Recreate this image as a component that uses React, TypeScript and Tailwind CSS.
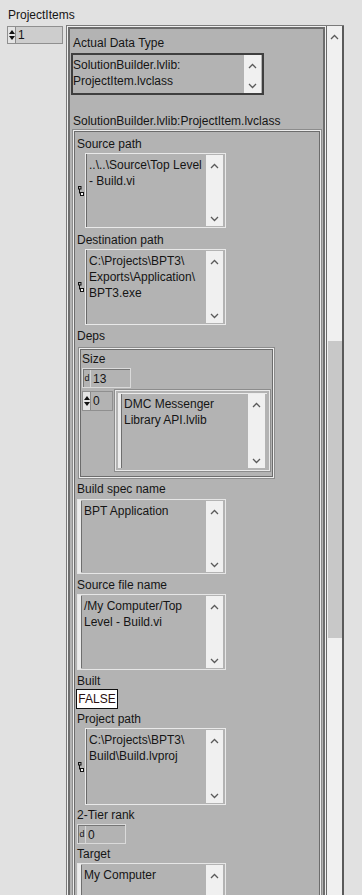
import React from "react";

// LabVIEW-style front panel: ProjectItems array of clusters

const Chevron = ({ down }: { down?: boolean }) => (
  <svg width="9" height="6" viewBox="0 0 9 6" className="shrink-0">
    <polyline
      points={down ? "1,1 4.5,4.5 8,1" : "1,5 4.5,1.5 8,5"}
      fill="none"
      stroke="#5a5a5a"
      strokeWidth="1.3"
    />
  </svg>
);

const VScroll = () => (
  <div className="w-[17px] shrink-0 self-stretch bg-[#f0f0f0] flex flex-col items-center justify-between pt-[8px] pb-[4px]">
    <Chevron />
    <Chevron down />
  </div>
);

const PathIcon = () => (
  <svg width="7" height="10" viewBox="0 0 7 10">
    <rect x="0.5" y="0.5" width="2.5" height="2.5" fill="none" stroke="#111" strokeWidth="1" />
    <line x1="1.5" y1="3" x2="1.5" y2="7.5" stroke="#111" strokeWidth="1" />
    <rect x="2.5" y="6.5" width="3" height="3" fill="#f4f4f4" stroke="#111" strokeWidth="1" />
  </svg>
);

const Spin = () => (
  <div className="w-[8px] shrink-0 flex flex-col items-center justify-center gap-[2px] border-r border-[#8a8a8a] bg-[#e4e4e4]">
    <svg width="6" height="4" viewBox="0 0 6 4">
      <polygon points="0,4 3,0 6,4" fill="#111" />
    </svg>
    <svg width="6" height="4" viewBox="0 0 6 4">
      <polygon points="0,0 6,0 3,4" fill="#111" />
    </svg>
  </div>
);

const Label = ({ children, className = "" }: { children: React.ReactNode; className?: string }) => (
  <div className={`shrink-0 h-[16px] leading-[16px] whitespace-nowrap text-[#151515] ${className}`}>{children}</div>
);

const Lines = ({ lines }: { lines: string[] }) => (
  <div className="flex-1 min-w-0 leading-[16px] text-[#151515] pt-[2px]">
    {lines.map((l) => (
      <div key={l} className="whitespace-nowrap">
        {l}
      </div>
    ))}
  </div>
);

// three-line etched frame used by clusters
const Frame = ({ children, className = "" }: { children: React.ReactNode; className?: string }) => (
  <div className={`border border-[#8c8c8c] ${className}`}>
    <div className="h-full border border-[#ededed]">
      <div className="h-full border border-[#6c6c6c] bg-[#b3b3b3]">{children}</div>
    </div>
  </div>
);

const PathBox = ({ lines, h }: { lines: string[]; h: string }) => (
  <div className="flex items-center pl-[1px]">
    <div className="w-[7px] shrink-0 flex justify-center">
      <PathIcon />
    </div>
    <div className={`w-[141px] ${h} border border-[#e9e9e9]`}>
      <div className="h-full flex border-l border-[#6a6a6a] pl-[2px] pr-[2px] py-[1px]">
        <Lines lines={lines} />
        <VScroll />
      </div>
    </div>
  </div>
);

const StrBox = ({ lines, h }: { lines: string[]; h: string }) => (
  <div className={`w-[149px] ${h} border border-[#e6e6e6]`}>
    <div className="h-full flex border-l-[3px] border-[#ececec] pr-[2px] py-[1px]">
      <div className="w-px self-stretch bg-[#6e6e6e] mr-[2px]" />
      <Lines lines={lines} />
      <VScroll />
    </div>
  </div>
);

const Numeric = ({ value, w }: { value: string; w: string }) => (
  <div className={`${w} h-[20px] border border-[#dadada]`}>
    <div className="h-full flex items-center border-l border-t border-[#767676] bg-[#b3b3b3]">
      <span className="text-[9px] leading-none w-[6px] text-center text-[#151515]">d</span>
      <div className="self-stretch w-px bg-[#d6d6d6] mr-[2px]" />
      <span className="text-[#151515]">{value}</span>
    </div>
  </div>
);

export default function App() {
  return (
    <div className="w-[362px] h-[895px] overflow-hidden bg-[#e1e1e1] font-['Liberation_Sans',Arial,sans-serif] text-[12px]">
      <div className="pl-[8px] pt-[7px] leading-[16px] text-[#151515]">ProjectItems</div>

      <div className="flex pl-[7px] mt-[2px]">
        {/* array index */}
        <div className="mt-[1px] w-[56px] h-[18px] border border-[#8f8f8f] flex bg-[#cdcdcd]">
          <Spin />
          <span className="pl-[2px] leading-[16px] text-[#151515]">1</span>
        </div>

        {/* array frame */}
        <div className="ml-[3px] w-[278px] h-[880px] flex border-l border-t border-[#7a7a7a]">
          <div className="w-[259px] border border-[#f0f0f0]">
            <div className="h-full border-2 border-[#6d6d6d] bg-[#b3b3b3] flex flex-col">
              <Label className="mt-[6px] pl-[3px]">Actual Data Type</Label>
              <div className="shrink-0 mt-[2px] ml-px w-[193px] h-[42px] border-2 border-[#3f3f3f] flex pr-px">
                <Lines lines={["SolutionBuilder.lvlib:", "ProjectItem.lvclass"]} />
                <VScroll />
              </div>
              <Label className="mt-[18px] pl-[3px]">SolutionBuilder.lvlib:ProjectItem.lvclass</Label>

              <Frame className="ml-[2px] w-[250px] flex-1 min-h-0">
                <div className="flex flex-col pl-[2px]">
                  <Label className="mt-[4px]">Source path</Label>
                  <div className="mt-[1px]">
                    <PathBox h="h-[75px]" lines={["..\\..\\Source\\Top Level", "- Build.vi"]} />
                  </div>

                  <Label className="mt-[4px]">Destination path</Label>
                  <div className="mt-[1px]">
                    <PathBox h="h-[76px]" lines={["C:\\Projects\\BPT3\\", "Exports\\Application\\", "BPT3.exe"]} />
                  </div>

                  <Label className="mt-[3px]">Deps</Label>
                  <Frame className="shrink-0 mt-[3px] ml-px w-[197px] h-[132px]">
                    <div className="flex flex-col pl-px">
                      <Label className="mt-px">Size</Label>
                      <div className="mt-px">
                        <Numeric value="13" w="w-[49px]" />
                      </div>
                      <div className="mt-px flex">
                        <div className="mt-[2px] w-[31px] h-[20px] border border-[#8f8f8f] flex bg-[#b3b3b3]">
                          <Spin />
                          <span className="pl-[2px] leading-[18px] text-[#151515]">0</span>
                        </div>
                        <div className="ml-px w-[157px] h-[83px] border border-[#8c8c8c]">
                          <div className="h-full border border-[#e9e9e9] p-[2px]">
                            <div className="h-full flex border-l-[3px] border-t border-[#ececec] pr-[2px]">
                              <div className="w-px self-stretch bg-[#6e6e6e] mr-[2px]" />
                              <Lines lines={["DMC Messenger", "Library API.lvlib"]} />
                              <VScroll />
                            </div>
                          </div>
                        </div>
                      </div>
                    </div>
                  </Frame>

                  <Label className="mt-[2px]">Build spec name</Label>
                  <div className="mt-[2px]">
                    <StrBox h="h-[75px]" lines={["BPT Application"]} />
                  </div>

                  <Label className="mt-[3px]">Source file name</Label>
                  <div className="mt-[1px]">
                    <StrBox h="h-[76px]" lines={["/My Computer/Top", "Level - Build.vi"]} />
                  </div>

                  <Label className="mt-[3px]">Built</Label>
                  <div className="-ml-px w-[42px] h-[20px] border border-[#111] bg-white flex items-center justify-center text-[#2a1010]">
                    FALSE
                  </div>

                  <Label className="mt-[2px]">Project path</Label>
                  <div className="mt-[1px]">
                    <PathBox h="h-[77px]" lines={["C:\\Projects\\BPT3\\", "Build\\Build.lvproj"]} />
                  </div>

                  <Label className="mt-[2px]">2-Tier rank</Label>
                  <div className="mt-[1px]">
                    <Numeric value="0" w="w-[49px]" />
                  </div>

                  <Label className="mt-[2px]">Target</Label>
                  <div className="mt-[1px]">
                    <StrBox h="h-[78px]" lines={["My Computer"]} />
                  </div>
                </div>
              </Frame>
            </div>
          </div>

          {/* array scrollbar */}
          <div className="w-[18px] flex border-l border-[#6a6a6a]">
            <div className="w-[15px] bg-[#f0f0f0] flex flex-col items-center">
              <div className="mt-[8px]">
                <Chevron />
              </div>
              <div className="mt-[301px] w-[14px] h-[297px] bg-[#c8c8c8]" />
            </div>
            <div className="w-[2px] bg-[#5a5a5a]" />
          </div>
        </div>
      </div>
    </div>
  );
}
